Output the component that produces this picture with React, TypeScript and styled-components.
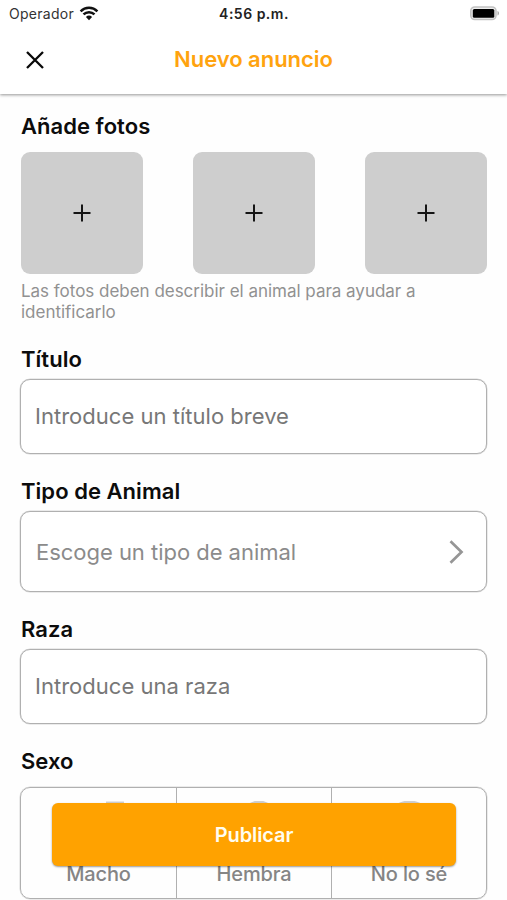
import React from "react";
import styled, { createGlobalStyle } from "styled-components";

const GlobalStyle = createGlobalStyle`
  *, *::before, *::after { box-sizing: border-box; }
  body { margin: 0; background: #fefefe; font-family: Inter, "Liberation Sans", sans-serif; overflow: hidden; }
  button, input { font: inherit; letter-spacing: inherit; }
`;

const Screen = styled.div`
  position: relative;
  width: 507px;
  height: 900px;
  overflow: hidden;
  background: #fefefe;
  color: #0c0c0c;
`;

const Header = styled.header`
  height: 94px;
  background: #fff;
  box-shadow: 0 1px 3px rgba(0, 0, 0, 0.42);
`;

const StatusBar = styled.div`
  display: grid;
  grid-template-columns: 1fr auto 1fr;
  align-items: center;
  height: 27px;
  padding: 0 8px 0 9px;
`;

const Carrier = styled.div`
  display: flex;
  align-items: center;
  gap: 5px;
  font-size: 14px;
  letter-spacing: 0.28px;
  color: #333;
`;

const Clock = styled.div`
  font-size: 14px;
  font-weight: 600;
  letter-spacing: 0.5px;
  color: #222;
`;

const Battery = styled.svg`
  justify-self: end;
`;

const TitleBar = styled.div`
  display: grid;
  grid-template-columns: 70px 1fr 70px;
  align-items: center;
  height: 65px;
`;

const IconButton = styled.button`
  display: flex;
  padding: 0;
  margin-left: 26px;
  border: 0;
  background: none;
`;

const Title = styled.h1`
  margin: 0 0 2px;
  text-align: center;
  font-size: 22px;
  font-weight: 600;
  letter-spacing: -0.02px;
  color: #ffa30f;
`;

const Form = styled.main`
  display: flex;
  flex-direction: column;
  gap: 25px;
  padding: 19px 20px 0;
`;

const Section = styled.section<{ $gap?: number }>`
  display: flex;
  flex-direction: column;
  gap: ${(p) => p.$gap ?? 7}px;
`;

const Label = styled.h2`
  margin: 0 0 0 1px;
  font-size: 22px;
  line-height: 26px;
  font-weight: 600;
  letter-spacing: 0.04px;
`;

const Photos = styled.div`
  display: flex;
  justify-content: space-between;
  padding-left: 1px;
`;

const PhotoTile = styled.button`
  display: flex;
  align-items: center;
  justify-content: center;
  width: 122px;
  height: 122px;
  padding: 0;
  border: 0;
  border-radius: 9px;
  background: #cecece;
`;

const Caption = styled.p`
  margin: -6px 0 -2px 1px;
  width: 420px;
  font-size: 17px;
  line-height: 21px;
  letter-spacing: -0.02px;
  color: #919191;
`;

const TextField = styled.input`
  width: 100%;
  height: 75px;
  margin-bottom: -1px;
  padding: 0 14px 2px;
  border: 1px solid #b0b0b0;
  border-radius: 10px;
  box-shadow: 0 0 0 0.5px rgba(0, 0, 0, 0.15);
  background: #fff;
  outline: 0;
  font-size: 22px;
  letter-spacing: 0.02px;
  &::placeholder { color: #777; opacity: 1; }
`;

const SelectField = styled.button`
  display: flex;
  align-items: center;
  justify-content: space-between;
  height: 81px;
  margin-bottom: -1px;
  padding: 0 22px 0 15px;
  border: 1px solid #b0b0b0;
  border-radius: 10px;
  box-shadow: 0 0 0 0.5px rgba(0, 0, 0, 0.15);
  background: #fff;
  color: #8b8b8b;
  font-size: 22px;
  letter-spacing: -0.03px;
`;

const Options = styled.div`
  display: grid;
  grid-template-columns: repeat(3, 1fr);
  height: 112px;
  border: 1px solid #b0b0b0;
  border-radius: 10px;
  box-shadow: 0 0 0 0.5px rgba(0, 0, 0, 0.15);
`;

const Option = styled.div`
  display: flex;
  flex-direction: column;
  align-items: center;
  padding-top: 13px;
  font-size: 20px;
  line-height: 24px;
  font-weight: 500;
  letter-spacing: -0.15px;
  color: #858585;
  & + & { border-left: 1px solid #b0b0b0; }
`;

const OptionIcon = styled.svg`
  flex: none;
  margin-bottom: 1px;
`;

const PublishButton = styled.button`
  position: absolute;
  left: 52px;
  top: 803px;
  width: 404px;
  height: 63px;
  padding: 0;
  border: 0;
  border-radius: 6px;
  background: #ffa200;
  box-shadow: 0 1px 2px rgba(0, 0, 0, 0.4);
  color: #fffdf0;
  font-size: 20px;
  font-weight: 600;
  letter-spacing: -0.1px;
`;

const Plus = () => (
  <svg width="18" height="18" viewBox="0 0 18 18" fill="none" stroke="#151515" strokeWidth="2">
    <path d="M0.5 9h17M9 0.5v17" />
  </svg>
);

const options = [
  { name: "Macho", shape: <path d="M32 2h17v17M48 3 33 18M37 32a14 14 0 1 1-28 0a14 14 0 0 1 28 0" /> },
  { name: "Hembra", shape: <path d="M46 17a16 16 0 1 1-32 0a16 16 0 0 1 32 0M19 29 4 45M5 32l13 13" /> },
  { name: "No lo sé", shape: <path d="M48 23.500a22.500 22.500 0 1 1-45 0a22.500 22.500 0 0 1 45 0M19 20c0-9 14-9 14 0c0 6-7 5-7 12M26 37v3" /> },
];

export default function App() {
  return (
    <Screen>
      <GlobalStyle />
      <Header>
        <StatusBar>
          <Carrier>
            Operador
            <svg width="20" height="15" viewBox="0 0 20 15" fill="none" stroke="#111" strokeWidth="2.5">
              <path d="M1.600 5.300a12 12 0 0 1 16.800 0M4.500 8.400a7.800 7.800 0 0 1 11 0" />
              <path d="M10 14.200 6.900 11a4.500 4.500 0 0 1 6.200 0Z" fill="#111" stroke="none" />
            </svg>
          </Carrier>
          <Clock>4:56 p.m.</Clock>
          <Battery width="30" height="15" viewBox="0 0 30 15">
            <rect x="1.800" y="1" width="25.200" height="12.500" rx="4" fill="#eee" stroke="#c2c2c2" strokeWidth="1.600" />
            <rect x="3.800" y="3" width="21.500" height="8.700" rx="1.500" fill="#000" />
            <path d="M28.500 5v4.500c2-.7 2-3.800 0-4.500Z" fill="#aaa" />
          </Battery>
        </StatusBar>
        <TitleBar>
          <IconButton aria-label="Cerrar">
            <svg width="18" height="18" viewBox="0 0 18 18" fill="none" stroke="#080808" strokeWidth="2.300">
              <path d="M1 1l16 16M17 1L1 17" />
            </svg>
          </IconButton>
          <Title>Nuevo anuncio</Title>
        </TitleBar>
      </Header>
      <Form>
        <Section $gap={13}>
          <Label>Añade fotos</Label>
          <Photos>
            {[0, 1, 2].map((n) => (
              <PhotoTile key={n} aria-label="Añadir foto"><Plus /></PhotoTile>
            ))}
          </Photos>
          <Caption>Las fotos deben describir el animal para ayudar a identificarlo</Caption>
        </Section>
        <Section>
          <Label>Título</Label>
          <TextField placeholder="Introduce un título breve" />
        </Section>
        <Section>
          <Label>Tipo de Animal</Label>
          <SelectField>
            Escoge un tipo de animal
            <svg width="15" height="24" viewBox="0 0 15 24" fill="none" stroke="#969696" strokeWidth="2.700">
              <path d="M1.500 1.200 12.500 12 1.500 22.800" />
            </svg>
          </SelectField>
        </Section>
        <Section>
          <Label>Raza</Label>
          <TextField placeholder="Introduce una raza" />
        </Section>
        <Section $gap={13}>
          <Label>Sexo</Label>
          <Options>
            {options.map((o) => (
              <Option key={o.name}>
                <OptionIcon width="50" height="60" viewBox="0 0 50 60" fill="none" stroke="#cfcfcf" strokeWidth="3">
                  {o.shape}
                </OptionIcon>
                {o.name}
              </Option>
            ))}
          </Options>
        </Section>
      </Form>
      <PublishButton>Publicar</PublishButton>
    </Screen>
  );
}
